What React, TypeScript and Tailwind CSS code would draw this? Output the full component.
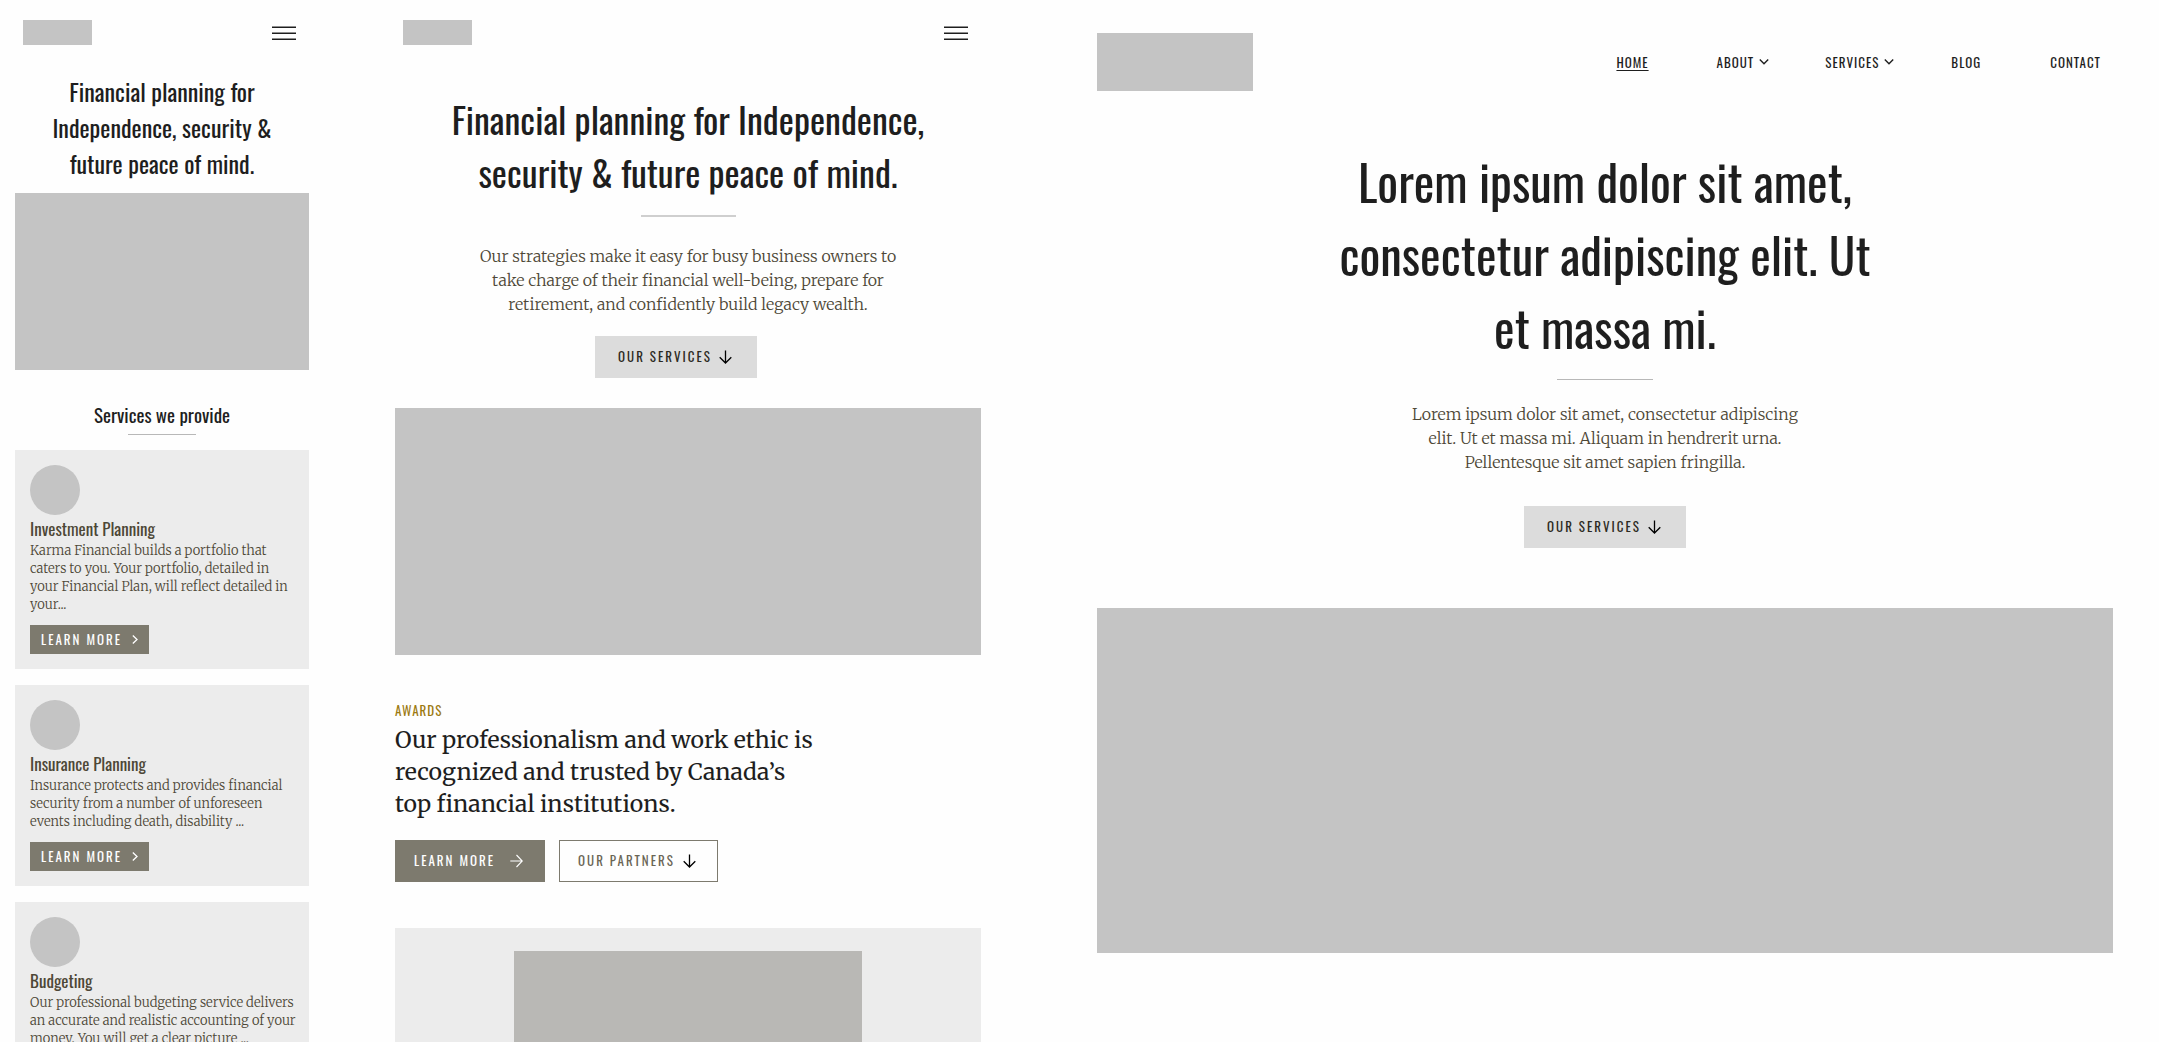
import type { ReactNode } from "react";

const services = [
  {
    title: "Investment Planning",
    text: "Karma Financial builds a portfolio that caters to you. Your portfolio, detailed in your Financial Plan, will reflect detailed in your...",
  },
  {
    title: "Insurance Planning",
    text: "Insurance protects and provides financial security from a number of unforeseen events including death, disability ...",
  },
  {
    title: "Budgeting",
    text: "Our professional budgeting service delivers an accurate and realistic accounting of your money. You will get a clear picture ...",
  },
];

const navItems = [
  { label: "Home", active: true, menu: false },
  { label: "About", active: false, menu: true },
  { label: "Services", active: false, menu: true },
  { label: "Blog", active: false, menu: false },
  { label: "Contact", active: false, menu: false },
];

function ArrowDown() {
  return (
    <svg viewBox="0 0 13 14" className="h-[14px] w-[13px] shrink-0 text-black" fill="none" stroke="currentColor" strokeWidth="1.3" aria-hidden="true">
      <path d="M6.5 0.5V13M0.7 7.2L6.5 13L12.3 7.2" />
    </svg>
  );
}

function ArrowRight() {
  return (
    <svg viewBox="0 0 13 14" className="h-[14px] w-[13px] shrink-0" fill="none" stroke="currentColor" strokeWidth="1.1" aria-hidden="true">
      <path d="M0.3 7H12.3M6.5 1L12.3 7L6.5 13" />
    </svg>
  );
}

function ChevronRight() {
  return (
    <svg viewBox="0 0 6 9" className="h-[9px] w-[6px] shrink-0" fill="none" stroke="currentColor" strokeWidth="1.3" aria-hidden="true">
      <path d="M0.8 0.6L5 4.5L0.8 8.4" />
    </svg>
  );
}

function ChevronDown() {
  return (
    <svg viewBox="0 0 10 6" className="h-[6px] w-[10px] shrink-0" fill="none" stroke="currentColor" strokeWidth="1.4" aria-hidden="true">
      <path d="M0.8 0.6L5 4.8L9.2 0.6" />
    </svg>
  );
}

function MenuButton() {
  return (
    <button type="button" aria-label="Open menu" className="text-[#1e1e1e]">
      <svg viewBox="0 0 24 17" className="block h-[17px] w-6" fill="none" stroke="currentColor" strokeWidth="1.5" aria-hidden="true">
        <path d="M0 3.25H24M0 9.25H24M0 15.25H24" />
      </svg>
    </button>
  );
}

function CompactHeader() {
  return (
    <header className="flex items-center justify-between pt-5 pr-[13px] pl-2">
      <div className="h-[25px] w-[69px] bg-[#c4c4c4]" role="img" aria-label="Logo" />
      <MenuButton />
    </header>
  );
}

function ServicesButton({ children }: { children: ReactNode }) {
  return (
    <button
      type="button"
      className="flex h-[42px] items-center gap-[7px] bg-[#dcdcdc] pr-[25px] pl-[23px] font-[Oswald] text-[13px] tracking-[2px] text-[#2b2922] uppercase"
    >
      {children}
      <ArrowDown />
    </button>
  );
}

function PhoneLayout() {
  return (
    <section className="min-w-0 flex-[294]">
      <CompactHeader />
      <h1 className="mt-7 px-4 text-center font-[Oswald] text-[24px] leading-[36px]">
        Financial planning for Independence, security &amp; future peace of mind.
      </h1>
      <div className="mt-3 h-[177px] bg-[#c4c4c4]" />
      <h2 className="mt-[30px] text-center font-[Oswald] text-[19px] leading-[28px]">Services we provide</h2>
      <hr className="mx-auto mt-[6px] w-[68px] border-[#b8b8b8]" />
      <div className="mt-[15px] flex flex-col gap-4">
        {services.map((service) => (
          <article key={service.title} className="bg-[#ececec] py-[15px] pr-3 pl-[15px] text-[#4d4736]">
            <div className="size-[50px] rounded-full bg-[#c4c4c4]" />
            <h3 className="mt-[2px] font-[Oswald] text-[17px] leading-[24px]">{service.title}</h3>
            <p className="mt-px font-[Merriweather] text-[13px] leading-[18px] font-light">{service.text}</p>
            <button
              type="button"
              className="mt-[11px] flex h-[29px] items-center gap-[10px] bg-[#7d7a6e] px-[11px] font-[Oswald] text-[13px] tracking-[2px] text-white uppercase"
            >
              Learn more
              <ChevronRight />
            </button>
          </article>
        ))}
      </div>
    </section>
  );
}

function TabletLayout() {
  return (
    <section className="ml-[86px] min-w-0 flex-[586]">
      <CompactHeader />
      <div className="mt-[47px] flex flex-col items-center text-center">
        <h1 className="max-w-[520px] font-[Oswald] text-[36px] leading-[53px]">
          Financial planning for Independence, security &amp; future peace of mind.
        </h1>
        <hr className="mt-[17px] w-[95px] border-t-2 border-[#cfcfcf]" />
        <p className="mt-[27px] max-w-[430px] font-[Merriweather] text-[16px] leading-[24px] font-light text-[#4d4736]">
          Our strategies make it easy for busy business owners to take charge of their financial well-being, prepare for
          retirement, and confidently build legacy wealth.
        </p>
        <div className="mt-5 pr-6">
          <ServicesButton>Our services</ServicesButton>
        </div>
      </div>
      <div className="mt-[30px] h-[247px] bg-[#c4c4c4]" />
      <p className="mt-[45px] font-[Oswald] text-[13px] leading-[20px] tracking-[1px] text-[#9c7a12] uppercase">Awards</p>
      <h2 className="mt-1 max-w-[424px] font-[Merriweather] text-[23px] leading-[32px]">
        Our professionalism and work ethic is recognized and trusted by Canada’s top financial institutions.
      </h2>
      <div className="mt-5 flex gap-[14px] font-[Oswald] text-[13px] tracking-[2px]">
        <button type="button" className="flex h-[42px] items-center gap-[15px] bg-[#7d7a6e] pr-[22px] pl-[19px] text-white uppercase">
          Learn more
          <ArrowRight />
        </button>
        <button type="button" className="flex h-[42px] items-center gap-2 border border-[#7d7a6e] pr-[21px] pl-[18px] text-[#6a6555] uppercase">
          Our partners
          <ArrowDown />
        </button>
      </div>
      <div className="mt-[46px] bg-[#ececec] pt-[23px]">
        <div className="mx-auto h-[240px] w-[348px] bg-[#b9b8b5]" />
      </div>
    </section>
  );
}

function DesktopLayout() {
  return (
    <section className="ml-[116px] min-w-0 flex-[1016]">
      <header className="flex items-center justify-between pt-[33px]">
        <div className="h-[58px] w-[156px] bg-[#c4c4c4]" role="img" aria-label="Logo" />
        <nav className="flex gap-14 font-[Oswald] text-[13px] leading-[20px] tracking-[1px]">
          {navItems.map((item) => (
            <div key={item.label} className={item.menu ? "" : "pr-3 pl-px"}>
              <a
                href="#"
                aria-current={item.active ? "page" : undefined}
                className={item.active ? "uppercase underline underline-offset-2" : "flex items-center gap-[5px] uppercase"}
              >
                {item.label}
                {item.menu && <ChevronDown />}
              </a>
            </div>
          ))}
        </nav>
      </header>
      <div className="mt-[54px] flex flex-col items-center text-center">
        <h1 className="max-w-[560px] font-[Oswald] text-[49px] leading-[73px]">
          Lorem ipsum dolor sit amet, consectetur adipiscing elit. Ut et massa mi.
        </h1>
        <hr className="mt-[15px] w-[96px] border-[#b8b8b8]" />
        <p className="mt-[22px] max-w-[400px] font-[Merriweather] text-[16px] leading-[24px] font-light text-[#4d4736]">
          Lorem ipsum dolor sit amet, consectetur adipiscing elit. Ut et massa mi. Aliquam in hendrerit urna.
          Pellentesque sit amet sapien fringilla.
        </p>
        <div className="mt-8">
          <ServicesButton>Our services</ServicesButton>
        </div>
      </div>
      <div className="mt-[60px] h-[345px] bg-[#c4c4c4]" />
    </section>
  );
}

export default function App() {
  return (
    <main className="flex h-screen overflow-hidden bg-[#fefefe] pr-[46px] pl-[15px] text-[#1e1e1e]">
      <PhoneLayout />
      <TabletLayout />
      <DesktopLayout />
    </main>
  );
}
